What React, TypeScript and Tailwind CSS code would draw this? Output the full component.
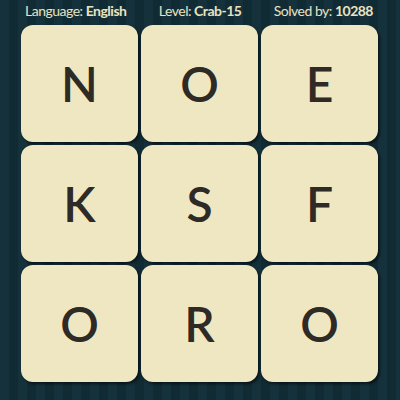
import React from "react";

const letters = ["N", "O", "E", "K", "S", "F", "O", "R", "O"];

export default function App() {
  return (
    <div
      className="w-[400px] h-[400px] overflow-hidden bg-[repeating-linear-gradient(90deg,#15323c_0px,#15323c_9px,#112b34_9px,#112b34_18px)]"
      style={{ fontFamily: "Lato, 'Noto Sans', sans-serif" }}
    >
      <div className="h-[25px] pb-[3px] flex items-center justify-between pl-[25px] pr-[27px] text-[14px] tracking-[-0.5px] text-[#e9e3c2] leading-none">
        <span>
          Language: <span className="font-bold">English</span>
        </span>
        <span>
          Level: <span className="font-bold">Crab-15</span>
        </span>
        <span>
          Solved by: <span className="font-bold">10288</span>
        </span>
      </div>
      <div className="ml-[21px] grid grid-cols-[117px_117px_117px] grid-rows-[117px_117px_117px] gap-[3px]">
        {letters.map((l, i) => (
          <div
            key={i}
            className="rounded-[12px] bg-[#efe7c2] shadow-[2px_2px_3px_rgba(0,0,0,0.55)] flex items-center justify-center text-[#2e2a25] text-[48px] font-semibold leading-none"
          >
            {l}
          </div>
        ))}
      </div>
    </div>
  );
}
